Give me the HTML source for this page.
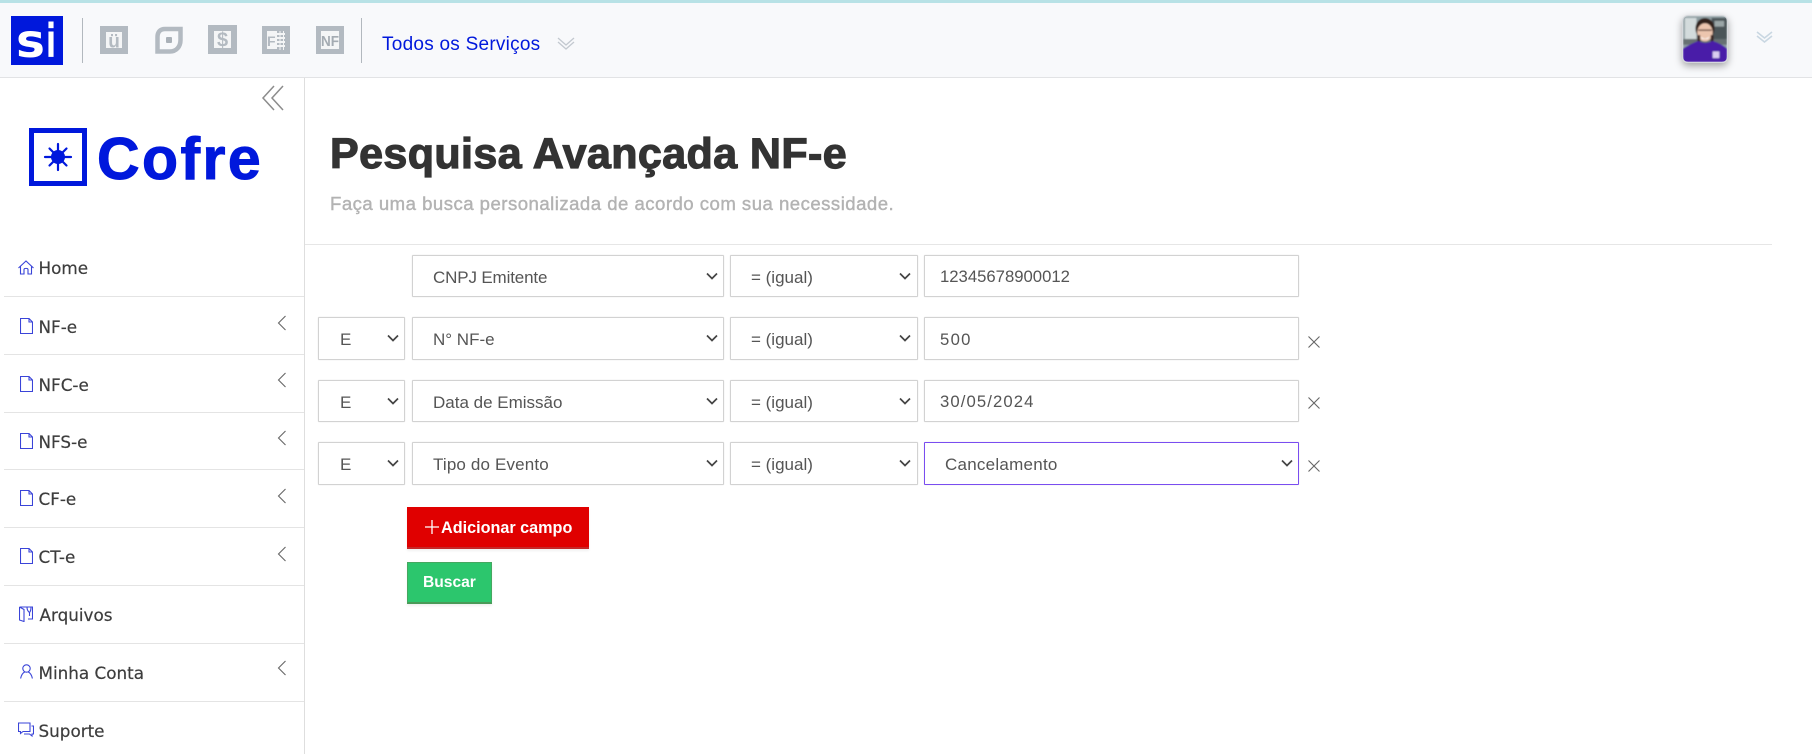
<!DOCTYPE html>
<html lang="pt-BR"><head><meta charset="utf-8"><title>Pesquisa Avançada NF-e</title>
<style>
*{box-sizing:border-box}
html,body{margin:0;padding:0;width:1812px;height:754px;overflow:hidden;background:#fff;font-family:"Liberation Sans",sans-serif}
.a{position:absolute}
.t{position:absolute;white-space:nowrap}
#top{left:0;top:0;width:1812px;height:78px;background:#f8f9fb;border-top:3px solid #b8e2e6;border-bottom:1px solid #e2e3e5}
.vd{position:absolute;width:1px;top:18px;height:45px;background:#b2b8be}
#side{left:0;top:78px;width:305px;height:676px;border-right:1px solid #dedede}
.ln{position:absolute;left:4px;width:300px;height:1px;background:#e4e4e4}
.m{position:absolute;left:38.5px;font:500 16.8px/24px "DejaVu Sans",sans-serif;color:#3d3d3d;white-space:nowrap;-webkit-text-stroke:.2px #3d3d3d}
select,input{position:absolute;margin:0;background:#fff;border:1px solid #d2d2d2;border-radius:1px;appearance:none;-webkit-appearance:none;outline:0;color:#555;font-family:"Liberation Sans",sans-serif;box-shadow:0 0 1px rgba(0,0,0,.15)}
select{font-size:17px;padding:2px 0 0 20px}
input{font-size:16.7px;padding:2px 0 0 15px;color:#555}
.x{position:absolute;left:1308px;width:12px;height:12px}
.c{position:absolute;width:12px;height:8px;pointer-events:none}
.b{position:absolute;left:407px;color:#fff;font-weight:700;white-space:nowrap;box-shadow:0 2px 2px rgba(0,0,0,.06)}
</style></head><body>

<div id="top" class="a"></div>
<svg class="a" style="left:11px;top:16px" width="52" height="49" viewBox="0 0 52 49"><rect width="52" height="49" fill="#0018dc"/><text x="5" y="41" font-family="DejaVu Sans" font-weight="700" font-size="46" fill="#fff" textLength="29" lengthAdjust="spacingAndGlyphs">s</text><text x="35" y="41" font-family="DejaVu Sans" font-weight="700" font-size="46" fill="#fff" textLength="10" lengthAdjust="spacingAndGlyphs">i</text></svg>
<div class="vd" style="left:82px"></div>
<svg class="a" style="left:100px;top:26px" width="28" height="28" viewBox="0 0 28 28"><rect x="3" y="3" width="22" height="22" fill="#f4f5f6" stroke="#b3bac1" stroke-width="6"/><text x="14" y="21.500" text-anchor="middle" font-family="Liberation Sans" font-weight="700" font-size="19" fill="#b3bac1">ü</text></svg>
<svg class="a" style="left:155px;top:26px" width="28" height="28" viewBox="0 0 28 28"><path d="M10 3H25.500V14C25.500 21 21 25.500 15 25.500H2.500V11C2.500 6 5 3 10 3Z" fill="none" stroke="#b3bac1" stroke-width="4.500"/><rect x="11" y="11" width="6" height="6" rx="1" fill="#aab1b8"/></svg>
<svg class="a" style="left:208px;top:25px" width="29" height="29" viewBox="0 0 29 29"><rect x="3" y="3" width="23" height="23" fill="#f4f5f6" stroke="#b3bac1" stroke-width="6"/><text x="14.500" y="21.500" text-anchor="middle" font-family="Liberation Sans" font-weight="700" font-size="20" fill="#b3bac1">$</text></svg>
<svg class="a" style="left:262px;top:26px" width="28" height="28" viewBox="0 0 28 28"><rect x="2.500" y="2.500" width="23" height="23" fill="#f4f5f6" stroke="#b3bac1" stroke-width="5"/><text x="5" y="20" font-family="Liberation Sans" font-weight="700" font-size="14" fill="#b3bac1">F</text><path d="M15 6H24M15 10H24M15 14H24M15 18H24M15 22H24" stroke="#b3bac1" stroke-width="2"/><path d="M18 5V24M21.500 5V24" stroke="#f4f5f6" stroke-width="1"/></svg>
<svg class="a" style="left:316px;top:26px" width="28" height="28" viewBox="0 0 28 28"><rect x="2.500" y="2.500" width="23" height="23" fill="#f4f5f6" stroke="#b3bac1" stroke-width="5"/><text x="14" y="20" text-anchor="middle" font-family="Liberation Sans" font-weight="700" font-size="15" fill="#a4abb2" textLength="18" lengthAdjust="spacingAndGlyphs">NF</text></svg>
<div class="vd" style="left:361px"></div>
<span class="t" style="left:382px;top:33px;font-size:19px;line-height:24px;color:#0018dc;letter-spacing:.25px">Todos os Serviços</span>
<svg class="a" style="left:557px;top:36px" width="18" height="14" viewBox="0 0 18 14" fill="none" stroke="#c3c9d0" stroke-width="1.300"><path d="M1 2L9 9L17 2M1 6L9 13L17 6"/></svg>

<svg class="a" style="left:1682px;top:15px;border-radius:6px;box-shadow:0 3px 8px rgba(0,0,0,.35);border:1px solid #d5d8dc" width="46" height="48" viewBox="0 0 46 48">
<defs><filter id="bl"><feGaussianBlur stdDeviation=".7"/></filter></defs>
<g filter="url(#bl)"><rect width="46" height="48" fill="#8f9ea2"/><rect x="2" y="2" width="12" height="22" fill="#d3dbdc"/><rect x="30" y="2" width="16" height="24" fill="#4b5458"/><rect x="33" y="5" width="10" height="6" fill="#9ba6a7"/><rect y="24" width="46" height="6" fill="#667072"/>
<ellipse cx="23" cy="13" rx="10" ry="11" fill="#33231e"/><ellipse cx="23" cy="17" rx="8" ry="9.500" fill="#ecc5ae"/><path d="M15 20V30H18V20ZM29 20V30H32V20Z" fill="#3a2620"/><rect x="16" y="14" width="14" height="1.500" fill="#6b4d43"/><path d="M18 21Q23 26 28 21L26 24H20Z" fill="#fff"/>
<path d="M0 34Q8 29 16 26Q23 30 31 26Q40 29 46 34V48H0Z" fill="#4a1fa8"/><rect x="31" y="37" width="7" height="7" fill="#d9cdf0"/></g></svg>
<svg class="a" style="left:1756px;top:30px" width="17" height="13" viewBox="0 0 17 13" fill="none" stroke="#c9d7e2" stroke-width="1.600"><path d="M1 2L8.500 8L16 2M1 6L8.500 12L16 6"/></svg>

<div id="side" class="a"></div>
<svg class="a" style="left:261px;top:85px" width="24" height="26" viewBox="0 0 24 26" fill="none" stroke="#8c8c8c" stroke-width="1.500"><path d="M13 1L2 13L13 25M22 1L11 13L22 25"/></svg>
<svg class="a" style="left:29px;top:128px" width="58" height="58" viewBox="0 0 58 58"><rect x="2.500" y="2.500" width="53" height="53" fill="#fff" stroke="#0018dc" stroke-width="5"/><circle cx="29" cy="29" r="7" fill="#0018dc"/><path d="M29 16V42M16 29H42M20.500 20.500L37.500 37.500M37.500 20.500L20.500 37.500" stroke="#0018dc" stroke-width="2.200" stroke-linecap="round"/></svg>
<span class="t" style="left:97px;top:123px;font-size:59px;line-height:72px;font-weight:700;color:#0018dc;-webkit-text-stroke:1px #0018dc;letter-spacing:2.400px">Cofre</span>

<div class="ln" style="top:296px"></div><div class="ln" style="top:354px"></div><div class="ln" style="top:412px"></div><div class="ln" style="top:469px"></div><div class="ln" style="top:527px"></div><div class="ln" style="top:585px"></div><div class="ln" style="top:643px"></div><div class="ln" style="top:701px"></div>

<svg class="a" style="left:18px;top:260px" width="16" height="15" viewBox="0 0 16 15" fill="none" stroke="#3a44d8" stroke-width="1.100"><path d="M.5 8L8 1L15.500 8M2.500 6.500V14H6V9.500C6 8 10 8 10 9.500V14H13.500V6.500"/></svg>
<span class="m" style="top:256px">Home</span>
<svg class="a" style="left:20px;top:318px" width="13" height="16" viewBox="0 0 13 16" fill="none" stroke="#3a44d8" stroke-width="1.100"><path d="M.5 .5H9L12.500 4V15.500H.5ZM9 .5V4H12.500"/></svg>
<span class="m" style="top:315px">NF-e</span>
<svg class="a" style="left:20px;top:376px" width="13" height="16" viewBox="0 0 13 16" fill="none" stroke="#3a44d8" stroke-width="1.100"><path d="M.5 .5H9L12.500 4V15.500H.5ZM9 .5V4H12.500"/></svg>
<span class="m" style="top:373px">NFC-e</span>
<svg class="a" style="left:20px;top:433px" width="13" height="16" viewBox="0 0 13 16" fill="none" stroke="#3a44d8" stroke-width="1.100"><path d="M.5 .5H9L12.500 4V15.500H.5ZM9 .5V4H12.500"/></svg>
<span class="m" style="top:430px">NFS-e</span>
<svg class="a" style="left:20px;top:490px" width="13" height="16" viewBox="0 0 13 16" fill="none" stroke="#3a44d8" stroke-width="1.100"><path d="M.5 .5H9L12.500 4V15.500H.5ZM9 .5V4H12.500"/></svg>
<span class="m" style="top:487px">CF-e</span>
<svg class="a" style="left:20px;top:548px" width="13" height="16" viewBox="0 0 13 16" fill="none" stroke="#3a44d8" stroke-width="1.100"><path d="M.5 .5H9L12.500 4V15.500H.5ZM9 .5V4H12.500"/></svg>
<span class="m" style="top:545px">CT-e</span>
<svg class="a" style="left:19px;top:606px" width="14" height="16" viewBox="0 0 14 16" fill="none" stroke="#3a44d8" stroke-width="1.100"><path d="M.5 1H13.500V13H9M.5 1V14L5 15.500V3.500L.5 1M8 1C8 5 10 6 10.500 6.500C11 6 12 5 12 1M10.500 6.500V10"/></svg>
<span class="m" style="top:603px;left:39.5px">Arquivos</span>
<svg class="a" style="left:20px;top:664px" width="13" height="15" viewBox="0 0 13 15" fill="none" stroke="#3a44d8" stroke-width="1.100"><circle cx="6.500" cy="4.500" r="3.700"/><path d="M.6 14.500C1.500 10.500 3.500 8.500 4.800 8M12.400 14.500C11.500 10.500 9.500 8.500 8.200 8"/></svg>
<span class="m" style="top:661px">Minha Conta</span>
<svg class="a" style="left:18px;top:722px" width="16" height="15" viewBox="0 0 16 15" fill="none" stroke="#3a44d8" stroke-width="1.100"><path d="M.5 1H12V9.500H5L2.500 11.500V9.500H.5ZM13.500 4H15.500V12H14V14L11.500 12H6"/></svg>
<span class="m" style="top:719px">Suporte</span>

<svg class="a" style="left:277px;top:315px" width="10" height="16" viewBox="0 0 10 16" fill="none" stroke="#666" stroke-width="1.100"><path d="M8.500 1L1.500 8L8.500 15"/></svg>
<svg class="a" style="left:277px;top:372px" width="10" height="16" viewBox="0 0 10 16" fill="none" stroke="#666" stroke-width="1.100"><path d="M8.500 1L1.500 8L8.500 15"/></svg>
<svg class="a" style="left:277px;top:430px" width="10" height="16" viewBox="0 0 10 16" fill="none" stroke="#666" stroke-width="1.100"><path d="M8.500 1L1.500 8L8.500 15"/></svg>
<svg class="a" style="left:277px;top:488px" width="10" height="16" viewBox="0 0 10 16" fill="none" stroke="#666" stroke-width="1.100"><path d="M8.500 1L1.500 8L8.500 15"/></svg>
<svg class="a" style="left:277px;top:546px" width="10" height="16" viewBox="0 0 10 16" fill="none" stroke="#666" stroke-width="1.100"><path d="M8.500 1L1.500 8L8.500 15"/></svg>
<svg class="a" style="left:277px;top:660px" width="10" height="16" viewBox="0 0 10 16" fill="none" stroke="#666" stroke-width="1.100"><path d="M8.500 1L1.500 8L8.500 15"/></svg>

<h1 class="t" style="margin:0;left:330px;top:128px;font-size:43px;line-height:52px;font-weight:700;color:#333;-webkit-text-stroke:1.2px #333;letter-spacing:.4px">Pesquisa Avançada NF-e</h1>
<span class="t" style="left:330px;top:192px;font-size:18.600px;line-height:24px;color:#b3b3b3;-webkit-text-stroke:.4px #b3b3b3;letter-spacing:.47px">Faça uma busca personalizada de acordo com sua necessidade.</span>
<div class="a" style="left:305px;top:244px;width:1467px;height:1px;background:#e6e6e6"></div>

<!-- row 1 -->
<select style="left:412px;top:255px;width:312px;height:42px;letter-spacing:-.15px"><option>CNPJ Emitente</option></select>
<select style="left:730px;top:255px;width:188px;height:42px"><option>= (igual)</option></select>
<input style="left:924px;top:255px;width:375px;height:42px" value="12345678900012">
<!-- row 2 -->
<select style="left:318px;top:317px;width:87px;height:43px;padding-left:21px"><option>E</option></select>
<select style="left:412px;top:317px;width:312px;height:43px"><option>N° NF-e</option></select>
<select style="left:730px;top:317px;width:188px;height:43px"><option>= (igual)</option></select>
<input style="left:924px;top:317px;width:375px;height:43px;letter-spacing:1.3px" value="500">
<!-- row 3 -->
<select style="left:318px;top:380px;width:87px;height:42px;padding-left:21px"><option>E</option></select>
<select style="left:412px;top:380px;width:312px;height:42px"><option>Data de Emissão</option></select>
<select style="left:730px;top:380px;width:188px;height:42px"><option>= (igual)</option></select>
<input style="left:924px;top:380px;width:375px;height:42px;letter-spacing:1.1px" value="30/05/2024">
<!-- row 4 -->
<select style="left:318px;top:442px;width:87px;height:43px;padding-left:21px"><option>E</option></select>
<select style="left:412px;top:442px;width:312px;height:43px;letter-spacing:.15px"><option>Tipo do Evento</option></select>
<select style="left:730px;top:442px;width:188px;height:43px"><option>= (igual)</option></select>
<select style="left:924px;top:442px;width:375px;height:43px;border-color:#7a4df0;letter-spacing:.25px"><option>Cancelamento</option></select>

<svg class="c" style="left:706px;top:272px" viewBox="0 0 12 8" fill="none" stroke="#444" stroke-width="1.700"><path d="M1 1.500L6 6.500L11 1.500"/></svg>
<svg class="c" style="left:899px;top:272px" viewBox="0 0 12 8" fill="none" stroke="#444" stroke-width="1.700"><path d="M1 1.500L6 6.500L11 1.500"/></svg>
<svg class="c" style="left:387px;top:334px" viewBox="0 0 12 8" fill="none" stroke="#444" stroke-width="1.700"><path d="M1 1.500L6 6.500L11 1.500"/></svg>
<svg class="c" style="left:706px;top:334px" viewBox="0 0 12 8" fill="none" stroke="#444" stroke-width="1.700"><path d="M1 1.500L6 6.500L11 1.500"/></svg>
<svg class="c" style="left:899px;top:334px" viewBox="0 0 12 8" fill="none" stroke="#444" stroke-width="1.700"><path d="M1 1.500L6 6.500L11 1.500"/></svg>
<svg class="c" style="left:387px;top:397px" viewBox="0 0 12 8" fill="none" stroke="#444" stroke-width="1.700"><path d="M1 1.500L6 6.500L11 1.500"/></svg>
<svg class="c" style="left:706px;top:397px" viewBox="0 0 12 8" fill="none" stroke="#444" stroke-width="1.700"><path d="M1 1.500L6 6.500L11 1.500"/></svg>
<svg class="c" style="left:899px;top:397px" viewBox="0 0 12 8" fill="none" stroke="#444" stroke-width="1.700"><path d="M1 1.500L6 6.500L11 1.500"/></svg>
<svg class="c" style="left:387px;top:459px" viewBox="0 0 12 8" fill="none" stroke="#444" stroke-width="1.700"><path d="M1 1.500L6 6.500L11 1.500"/></svg>
<svg class="c" style="left:706px;top:459px" viewBox="0 0 12 8" fill="none" stroke="#444" stroke-width="1.700"><path d="M1 1.500L6 6.500L11 1.500"/></svg>
<svg class="c" style="left:899px;top:459px" viewBox="0 0 12 8" fill="none" stroke="#444" stroke-width="1.700"><path d="M1 1.500L6 6.500L11 1.500"/></svg>
<svg class="c" style="left:1281px;top:459px" viewBox="0 0 12 8" fill="none" stroke="#444" stroke-width="1.700"><path d="M1 1.500L6 6.500L11 1.500"/></svg>

<svg class="x" style="top:336px" viewBox="0 0 12 12" fill="none" stroke="#666" stroke-width="1.100"><path d="M.5 .5L11.500 11.500M11.500 .5L.5 11.500"/></svg>
<svg class="x" style="top:397px" viewBox="0 0 12 12" fill="none" stroke="#666" stroke-width="1.100"><path d="M.5 .5L11.500 11.500M11.500 .5L.5 11.500"/></svg>
<svg class="x" style="top:460px" viewBox="0 0 12 12" fill="none" stroke="#666" stroke-width="1.100"><path d="M.5 .5L11.500 11.500M11.500 .5L.5 11.500"/></svg>

<div class="b" style="top:507px;width:182px;height:42px;background:#e00000;border-bottom:2px solid #c62828;font-size:16.200px;line-height:42px">
<svg class="a" style="left:18px;top:13px" width="14" height="14" viewBox="0 0 14 14" stroke="#fff" stroke-width="1.300"><path d="M7 0V14M0 7H14"/></svg>
<span class="t" style="left:34px;top:0">Adicionar campo</span></div>
<div class="b" style="top:562px;width:85px;height:42px;background:#2cc66d;border:1px solid #45a860;border-bottom:2px solid #4a9a58;font-size:15.600px;line-height:40px">
<span class="t" style="left:15px;top:0">Buscar</span></div>
</body></html>
